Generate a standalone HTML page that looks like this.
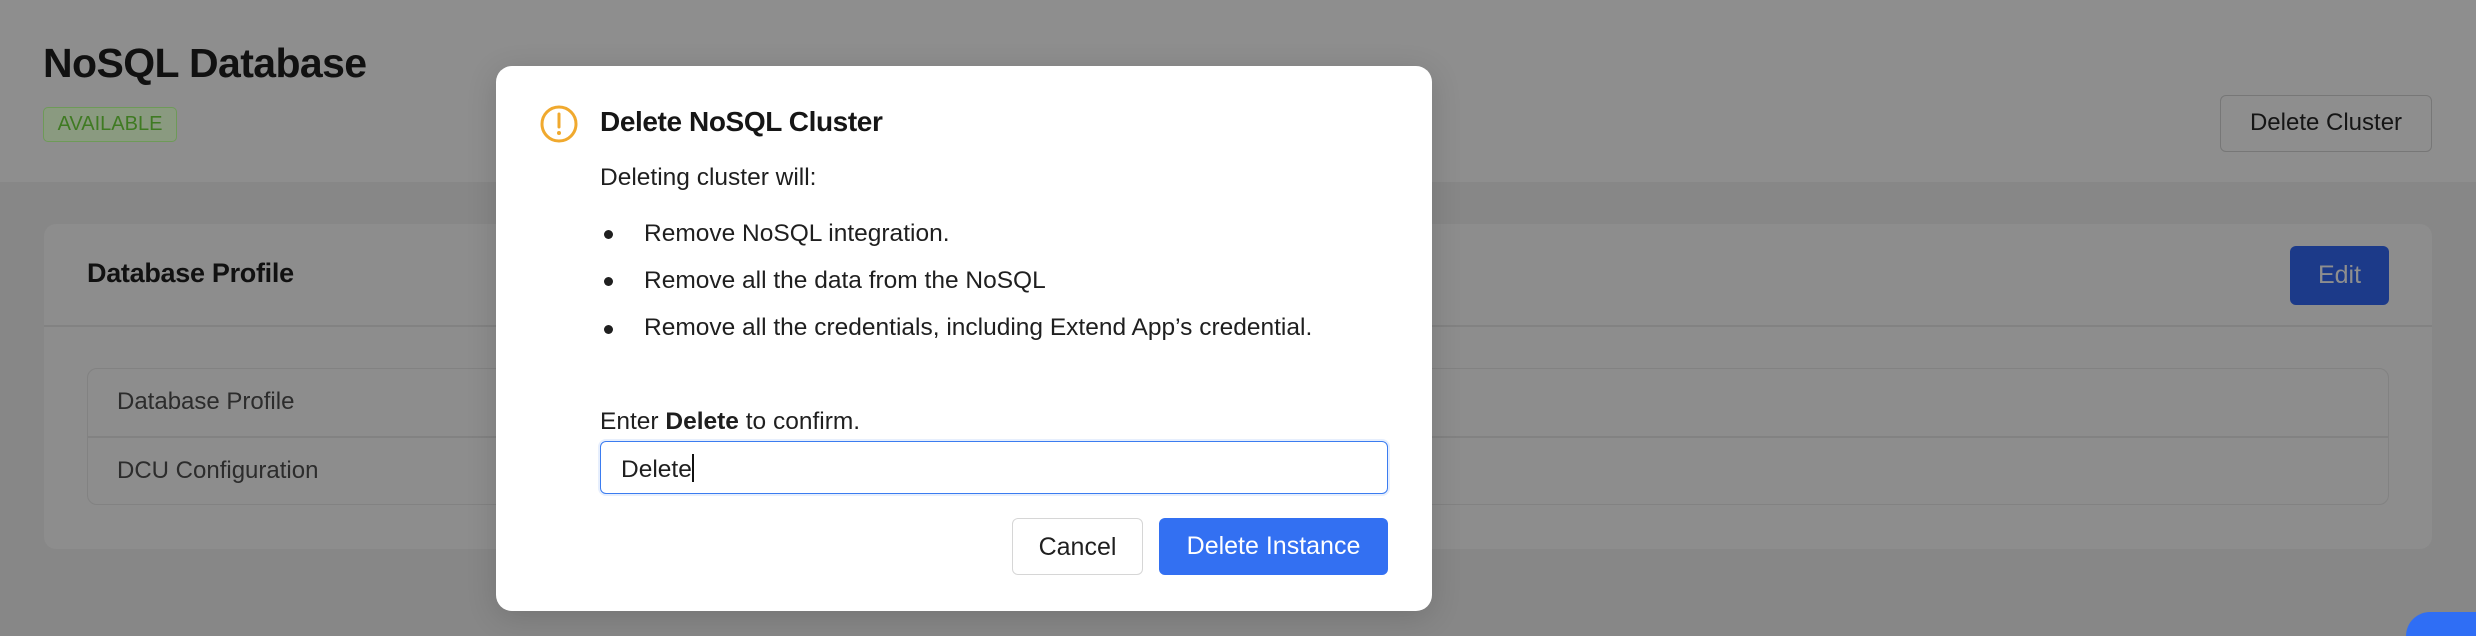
<!DOCTYPE html>
<html style="width:2476px;height:636px;overflow:hidden"><head><meta charset="utf-8"><style>
*{box-sizing:border-box;margin:0;padding:0}
body{width:2476px;height:636px;overflow:hidden;background:#878787;font-family:"Liberation Sans",Arial,sans-serif;position:relative;color:#1f1f1f}
.abs{position:absolute}
.hdr{left:0;top:0;width:2476px;height:182px;background:#8e8e8e}
.title{left:43px;top:40px;font-size:41px;font-weight:bold;color:#111;letter-spacing:-0.6px}
.badge{left:43px;top:107px;width:134px;height:35px;border:1.5px solid #6e9a58;border-radius:5px;background:#8a9a80;color:#3f7a22;font-size:20px;line-height:32px;text-align:center}
.dc{left:2220px;top:95px;width:212px;height:57px;border:1.5px solid #777;border-radius:6px;font-size:24px;line-height:54px;text-align:center;color:#151515;background:#8e8e8e}
.card{left:44px;top:224px;width:2388px;height:325px;background:#8d8d8d;border-radius:12px}
.cline{left:44px;top:325px;width:2388px;height:1.5px;background:#828282}
.ct{left:87px;top:258px;font-size:27px;font-weight:bold;color:#111;letter-spacing:-0.3px}
.edit{left:2290px;top:246px;width:99px;height:59px;background:#1c3a89;border-radius:6px;color:#8e8e8e;font-size:25px;line-height:59px;text-align:center}
.tbl{left:87px;top:368px;width:2302px;height:137px;border:1.5px solid #828282;border-radius:10px}
.tline{left:87px;top:436px;width:2302px;height:1.5px;background:#828282}
.r{left:117px;font-size:24px;color:#2c2c2c}
.blob{left:2406px;top:612px;width:70px;height:24px;background:#2f6ef5;border-radius:26px 0 0 0}
.modal{left:496px;top:66px;width:936px;height:545px;background:#fff;border-radius:16px;box-shadow:0 6px 30px rgba(0,0,0,.15)}
.m{font-size:24.5px;color:#1f1f1f}
.input{left:600px;top:441px;width:788px;height:53px;border:1.5px solid #3b7cf0;border-radius:6px;box-shadow:0 0 0 2px rgba(59,124,240,.12)}
.btn{top:518px;height:57px;border-radius:6px;font-size:25px;line-height:57px;text-align:center}
</style></head><body>
<div class="abs hdr"></div>
<div class="abs title">NoSQL Database</div>
<div class="abs badge">AVAILABLE</div>
<div class="abs dc">Delete Cluster</div>
<div class="abs card"></div>
<div class="abs cline"></div>
<div class="abs ct">Database Profile</div>
<div class="abs edit">Edit</div>
<div class="abs tbl"></div>
<div class="abs tline"></div>
<div class="abs r" style="top:388px">Database Profile</div>
<div class="abs r" style="top:457px">DCU Configuration</div>
<div class="abs blob"></div>

<div class="abs modal"></div>
<svg class="abs" style="left:539px;top:104px" width="40" height="40" viewBox="0 0 40 40"><circle cx="20" cy="20" r="17" fill="none" stroke="#f0a92e" stroke-width="3"/><line x1="20" y1="10" x2="20" y2="23" stroke="#f0a92e" stroke-width="3" stroke-linecap="round"/><circle cx="20" cy="29" r="2" fill="#f0a92e"/></svg>
<div class="abs" style="left:600px;top:106px;font-size:28px;font-weight:bold;color:#161616;letter-spacing:-0.4px">Delete NoSQL Cluster</div>
<div class="abs m" style="left:600px;top:164px">Deleting cluster will:</div>
<div class="abs" style="left:604px;top:230px;width:9px;height:9px;border-radius:50%;background:#1f1f1f"></div>
<div class="abs" style="left:604px;top:277px;width:9px;height:9px;border-radius:50%;background:#1f1f1f"></div>
<div class="abs" style="left:604px;top:325px;width:9px;height:9px;border-radius:50%;background:#1f1f1f"></div>
<div class="abs m" style="left:644px;top:220px">Remove NoSQL integration.</div>
<div class="abs m" style="left:644px;top:267px">Remove all the data from the NoSQL</div>
<div class="abs m" style="left:644px;top:314px">Remove all the credentials, including Extend App’s credential.</div>
<div class="abs m" style="left:600px;top:408px">Enter <b>Delete</b> to confirm.</div>
<div class="abs input"></div>
<div class="abs m" style="left:621px;top:454px">Delete<span style="display:inline-block;width:2px;height:28px;background:#111;vertical-align:-5px"></span></div>
<div class="abs btn" style="left:1012px;width:131px;border:1.5px solid #d6d6d6;color:#1f1f1f">Cancel</div>
<div class="abs btn" style="left:1159px;width:229px;background:#3370f2;color:#fff">Delete Instance</div>
</body></html>
